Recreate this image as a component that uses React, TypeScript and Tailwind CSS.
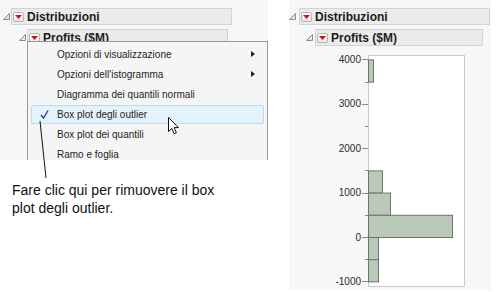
import React from "react";

const font = { fontFamily: '"Liberation Sans", Arial, sans-serif' };

function Disclosure() {
  return (
    <svg width="7" height="7" viewBox="0 0 7 7" className="shrink-0">
      <polygon points="0.5,6.5 6.5,0.5 6.5,6.5" fill="#e4e4e4" stroke="#8c8c8c" strokeWidth="1" />
    </svg>
  );
}

function RedButton() {
  return (
    <div className="flex h-[10px] w-[11px] shrink-0 items-center justify-center rounded-[2px] border border-[#b4b4b4] bg-gradient-to-b from-white to-[#e8e8e8]">
      <svg width="7" height="4" viewBox="0 0 7 4">
        <polygon points="0,0 7,0 3.5,4" fill="#d0121b" />
      </svg>
    </div>
  );
}

function Header({ label, tri, box, width }: { label: string; tri: number; box: number; width: number }) {
  return (
    <div className="flex items-center" style={{ paddingLeft: tri }}>
      <Disclosure />
      <div
        className="flex h-[17px] items-center gap-[3px] border border-[#d3d3d3] bg-[#ebebeb] pl-[1px]"
        style={{ marginLeft: box - tri - 7, width }}
      >
        <RedButton />
        <span className="text-[12px] font-bold leading-none text-[#1b1b1b]">{label}</span>
      </div>
    </div>
  );
}

const items = [
  { label: "Opzioni di visualizzazione", sub: true },
  { label: "Opzioni dell'istogramma", sub: true },
  { label: "Diagramma dei quantili normali" },
  { label: "Box plot degli outlier", checked: true },
  { label: "Box plot dei quantili" },
  { label: "Ramo e foglia" },
];

function Menu() {
  return (
    <div className="absolute left-[27px] top-[41px] h-[119px] w-[241px] overflow-hidden border border-b-0 border-[#979797] bg-[#f5f5f5] pt-[2px]">
      {items.map((it) => (
        <div key={it.label} className="relative flex h-[20px] items-center px-[3px]">
          <div
            className={`flex h-[19px] w-full items-center rounded-[2px] border ${
              it.checked ? "border-[#b9dcf2] bg-[#e4f2fb]" : "border-transparent"
            }`}
          >
            <div className="flex w-[25px] shrink-0 justify-center">
              {it.checked && (
                <svg width="9" height="9" viewBox="0 0 9 9">
                  <path d="M1 5 L3.5 8 L8 0.5" fill="none" stroke="#2c3aa0" strokeWidth="1.4" />
                </svg>
              )}
            </div>
            <span className="text-[10px] text-[#1e1e1e]">{it.label}</span>
            {it.sub && (
              <svg width="4" height="6" viewBox="0 0 4 6" className="ml-auto mr-[8px]">
                <polygon points="0,0 4,3 0,6" fill="#222" />
              </svg>
            )}
          </div>
        </div>
      ))}
    </div>
  );
}

const yOf = (v: number) => 187 - v * 0.0444;

const bars = [
  { lo: 3500, hi: 4000, x2: 373 },
  { lo: 1000, hi: 1500, x2: 382 },
  { lo: 500, hi: 1000, x2: 390 },
  { lo: 0, hi: 500, x2: 452 },
  { lo: -500, hi: 0, x2: 378 },
  { lo: -1000, hi: -500, x2: 378 },
];

function Histogram() {
  const ox = 289;
  const left = 368 - ox;
  return (
    <svg width="202" height="240" viewBox="0 0 202 240" className="mt-[4px]" style={font}>
      <rect x={left + 0.5} y="5.5" width="96" height="231" fill="#fff" stroke="#c9c9c9" />
      {bars.map((b) => (
        <rect
          key={b.lo}
          x={left + 0.5}
          y={yOf(b.hi) + 0.5}
          width={b.x2 - 368}
          height={yOf(b.lo) - yOf(b.hi)}
          fill="#b9cab9"
          stroke="#6e746e"
        />
      ))}
      {[4000, 3000, 2000, 1000, 0, -1000].map((v) => (
        <g key={v}>
          <line x1={left - 6} x2={left} y1={Math.round(yOf(v)) + 0.5} y2={Math.round(yOf(v)) + 0.5} stroke="#8a8a8a" />
          <text x={left - 7} y={yOf(v) + 3.5} fontSize="10" textAnchor="end" fill="#2a2a3a">
            {v}
          </text>
        </g>
      ))}
      {[3500, 2500, 1500, 500, -500].map((v) => (
        <line key={v} x1={left - 3} x2={left} y1={Math.round(yOf(v)) + 0.5} y2={Math.round(yOf(v)) + 0.5} stroke="#8a8a8a" />
      ))}
    </svg>
  );
}

export default function App() {
  return (
    <div className="relative flex h-[292px] w-[496px] bg-white" style={font}>
      <div className="relative w-[268px]">
        <div className="relative h-[160px] bg-[#f7f7f7] pt-[8px]">
          <Header label="Distribuzioni" tri={3} box={11} width={221} />
          <div className="mt-[4px]">
            <Header label="Profits ($M)" tri={19} box={27} width={201} />
          </div>
          <Menu />
          <svg width="18" height="20" viewBox="0 0 18 20" className="absolute left-[167px] top-[116px]">
            <path d="M1.5 1.5 L1.5 15.5 L4.8 12.4 L7.2 17.8 L9.4 16.9 L7.1 11.6 L11.5 11.6 Z" fill="#fff" stroke="#111" strokeWidth="1" strokeLinejoin="round" />
          </svg>
        </div>
        <p className="mt-[21px] pl-[12px] text-[14px] leading-[18px] text-[#111]">
          Fare clic qui per rimuovere il box
          <br />
          plot degli outlier.
        </p>
        <svg width="60" height="70" className="absolute left-0 top-[115px]">
          <line x1="40" y1="6" x2="46" y2="63" stroke="#111" strokeWidth="1" />
        </svg>
      </div>
      <div className="ml-[21px] h-[290px] w-[202px] bg-[#f7f7f7] pt-[8px]">
        <Header label="Distribuzioni" tri={0} box={10} width={191} />
        <div className="mt-[4px]">
          <Header label="Profits ($M)" tri={17} box={26} width={168} />
        </div>
        <Histogram />
      </div>
    </div>
  );
}
